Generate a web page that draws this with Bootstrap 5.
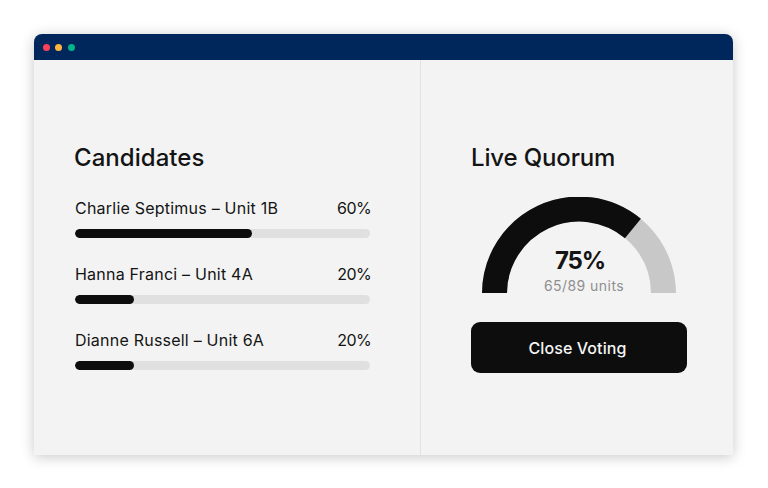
<!DOCTYPE html>
<html lang="en">
<head>
    <meta charset="UTF-8">
    <meta name="viewport" content="width=device-width, initial-scale=1.0">
    <title>Live Quorum</title>
    <link href="https://cdn.jsdelivr.net/npm/bootstrap@5.3.0/dist/css/bootstrap.min.css" rel="stylesheet">
    <style>
        body { background: #fff; font-family: Inter, "Liberation Sans", sans-serif; color: #141414; padding: 34px 35px 33px 34px; }
        .app-window { height: 421px; background: #f3f3f3; border-radius: 8px 8px 0 0; box-shadow: 0 2px 14px rgba(0,0,0,.22); overflow: hidden; }
        .title-bar { height: 26px; background: #00275c; padding-left: 8.5px; gap: 5.5px; }
        .win-dot { width: 7px; height: 7px; border-radius: 50%; }
        .dot-red { background: #f9415a; }
        .dot-yellow { background: #fdb63f; }
        .dot-green { background: #00b388; }
        .pane-row { height: 395px; }
        .left-pane { width: 387px; padding: 84px 50px 0 40px; border-right: 1px solid #e2e2e2; }
        .right-pane { padding: 84px 46px 0 50px; }
        .pane-title { font-size: 24px; font-weight: 500; line-height: 28px; margin: 0 0 24px; letter-spacing: .05px; }
        .right-pane .pane-title { letter-spacing: -.15px; }
        .vote-list { margin-left: 1px; }
        .vote-row { height: 66px; }
        .vote-label { font-size: 16px; font-weight: 400; line-height: 24px; margin-bottom: 9px; letter-spacing: .22px; }
        .vote-pct { letter-spacing: -.6px; margin-right: -1px; }
        .vote-bar { height: 9px; background: #e0e0e0; border-radius: 4.5px; }
        .vote-bar .progress-bar { background: #0d0d0d; border-radius: 4.5px; }
        .gauge-box { width: 216px; height: 96px; margin: 25px 0 29px; }
        .gauge-text { left: 0; right: 0; bottom: -3px; }
        .gauge-pct { font-size: 24px; font-weight: 700; line-height: 30px; letter-spacing: -1.2px; padding-left: 2px; }
        .gauge-units { font-size: 14px; line-height: 20px; color: #8f8f8f; letter-spacing: .45px; padding-left: 10px; }
        .close-btn { width: 216px; height: 51px; background: #0d0d0d; color: #f5f5f5; border: 0; border-radius: 9px; font-size: 16px; font-weight: 500; letter-spacing: .1px; padding-right: 15px; }
    </style>
</head>
<body>
<div class="app-window">
    <div class="title-bar d-flex align-items-center">
        <span class="win-dot dot-red"></span>
        <span class="win-dot dot-yellow"></span>
        <span class="win-dot dot-green"></span>
    </div>
    <div class="pane-row d-flex">
        <section class="left-pane">
            <h2 class="pane-title">Candidates</h2>
            <div id="voteList" class="vote-list"></div>
        </section>
        <section class="right-pane flex-grow-1">
            <h2 class="pane-title">Live Quorum</h2>
            <div class="gauge-box position-relative">
                <svg class="d-block" width="216" height="96" viewBox="0 0 216 96">
                    <path d="M23.5 96.5 A84.5 84.5 0 0 1 192.5 96.5" fill="none" stroke="#c8c8c8" stroke-width="25"/>
                    <path d="M23.5 96.5 A84.5 84.5 0 0 1 161.9 31.5" fill="none" stroke="#0d0d0d" stroke-width="25"/>
                </svg>
                <div class="gauge-text position-absolute text-center">
                    <div class="gauge-pct">75%</div>
                    <div class="gauge-units">65/89 units</div>
                </div>
            </div>
            <button class="btn close-btn" type="button">Close Voting</button>
        </section>
    </div>
</div>

<script src="https://cdn.jsdelivr.net/npm/bootstrap@5.3.0/dist/js/bootstrap.bundle.min.js"></script>
<script>
    const votes = [
        { name: "Charlie Septimus – Unit 1B", pct: 60 },
        { name: "Hanna Franci – Unit 4A", pct: 20 },
        { name: "Dianne Russell – Unit 6A", pct: 20 }
    ];
    document.getElementById("voteList").innerHTML = votes.map(v => `
        <div class="vote-row">
            <div class="vote-label d-flex justify-content-between"><span>${v.name}</span><span class="vote-pct">${v.pct}%</span></div>
            <div class="progress vote-bar"><div class="progress-bar" style="width: ${v.pct}%"></div></div>
        </div>`).join("");
</script>
</body>
</html>
